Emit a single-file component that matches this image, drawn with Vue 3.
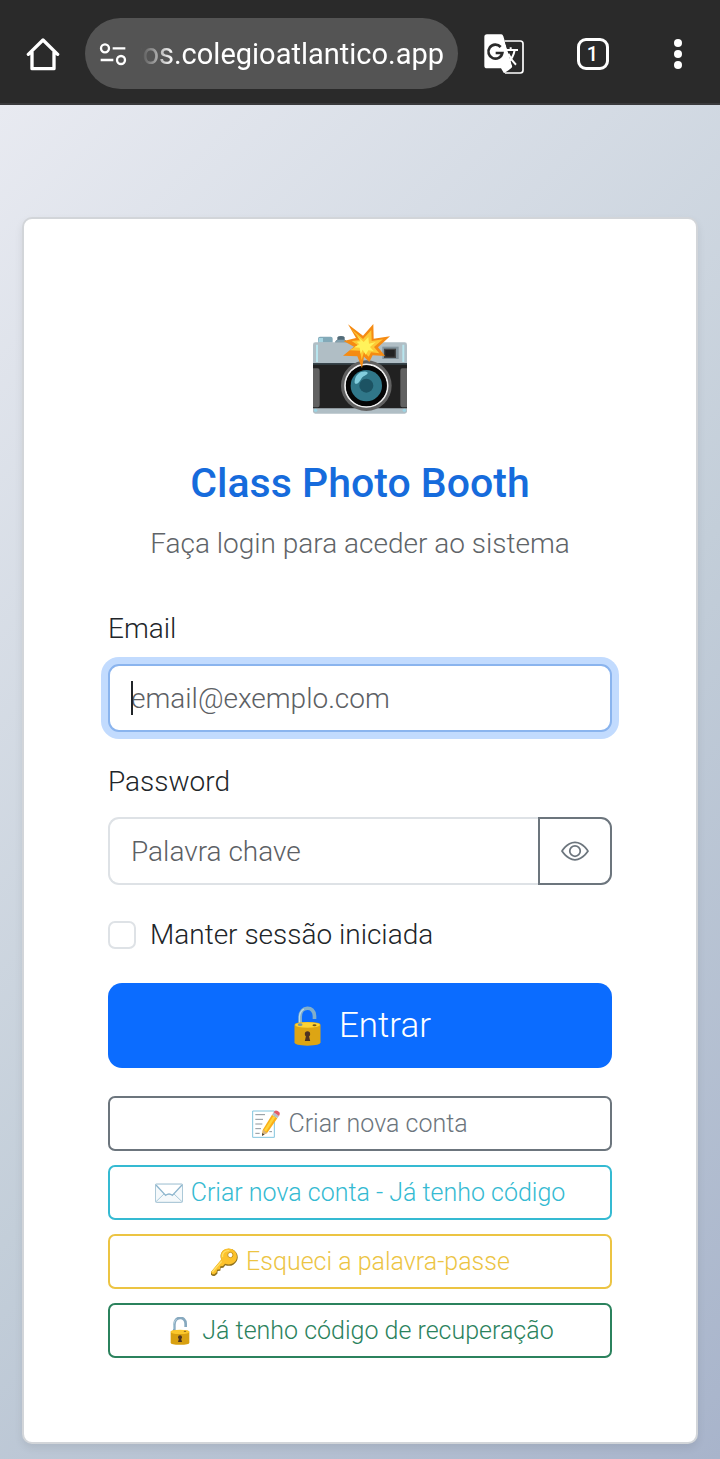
<script setup>
import { ref } from 'vue'

const email = ref('')
const password = ref('')
const remember = ref(false)
const showPassword = ref(false)

const actions = [
  { icon: 'note', label: 'Criar nova conta', tone: 'secondary' },
  { icon: 'mail', label: 'Criar nova conta - Já tenho código', tone: 'info' },
  { icon: 'key', label: 'Esqueci a palavra-passe', tone: 'warning' },
  { icon: 'lock', label: 'Já tenho código de recuperação', tone: 'success' },
]
</script>

<template>
  <div class="page">
    <header class="browser-bar">
      <button class="bar-button" type="button" aria-label="Home">
        <svg width="34" height="34" viewBox="0 0 102 102" fill="none" stroke="#fff" stroke-width="10" stroke-linecap="round" stroke-linejoin="round">
          <path d="M7 52 51 9l44 43M18 46v49h66V46" />
        </svg>
      </button>
      <button class="address" type="button">
        <svg class="site-icon" width="28" height="24" viewBox="0 0 84 72" fill="none" stroke="#fff" stroke-width="7">
          <circle cx="18" cy="19" r="12" />
          <path d="M41 19h38M5 54h38" />
          <circle cx="66" cy="54" r="12" />
        </svg>
        <span class="address-text"><span>tos.colegioatlantico.app</span></span>
      </button>
      <button class="bar-button translate" type="button" aria-label="Translate">
        <svg width="40" height="40" viewBox="0 0 120 120">
          <path d="M9 1h43q4 0 6 6l28 93-26 18-9-15H9q-8 0-8-8V9q0-8 8-8Z" fill="#fff" />
          <path d="M62 22h48q6 0 6 6v80q0 6-6 6H73l12-16Z" fill="#2a2a2a" />
          <path d="M62 21h47q8 0 8 8v80q0 8-8 8H63" fill="none" stroke="#fff" stroke-width="5" />
          <path d="M50 39A21 21 0 1 0 55 57H35" fill="none" stroke="#2a2a2a" stroke-width="8" />
          <path d="M66 48h36M80 40v8M92 48q-4 25-22 38M73 59q8 19 23 33" fill="none" stroke="#fff" stroke-width="6" />
        </svg>
      </button>
      <button class="bar-button" type="button" aria-label="Tabs"><span class="tab-count">1</span></button>
      <button class="bar-button" type="button" aria-label="Menu">
        <svg width="8" height="30" viewBox="0 0 8 30" fill="#fff">
          <circle cx="4" cy="4" r="4" /><circle cx="4" cy="15" r="4" /><circle cx="4" cy="26" r="4" />
        </svg>
      </button>
    </header>

    <main class="content">
      <form class="card" @submit.prevent>
        <div class="logo">
          <svg width="94" height="90" viewBox="39 42 282 270" role="img" aria-label="Camera">
            <path d="M54 98V86q0-6 6-6h32q6 0 6 6v12Z" fill="#82a9b8" />
            <path d="M57 84h12v13H55Z" fill="#a6d5e2" />
            <path d="M112 82q2-4 11-4t11 4v7q8 3 8 10h-37q0-7 7-10Z" fill="#526b78" />
            <path d="M108 94q2-5 8-5h16q6 0 6 8h-31Z" fill="#82a0ae" />
            <rect x="39" y="97" width="282" height="214" rx="7" fill="#b0bec5" />
            <path d="M48 104h6v52h-6zm259 0h6v52h-6z" fill="#b8e5ee" />
            <path d="M39 159h282v136H39Z" fill="#212121" />
            <path d="M39 159h282v5H39Z" fill="#37444b" />
            <path d="M39 175h14q6 0 6 7v103q0 7-6 7H39Zm282 0h-14q-6 0-6 7v103q0 7 6 7h14Z" fill="#616161" />
            <circle cx="47" cy="301" r="5" fill="#9bd5e4" /><circle cx="313" cy="301" r="5" fill="#9bd5e4" />
            <rect x="247" y="110" width="49" height="37" fill="#82939c" />
            <rect x="252" y="116" width="36" height="28" fill="#424242" />
            <rect x="256" y="120" width="28" height="20" fill="#222" />
            <circle cx="199" cy="227" r="76" fill="#616161" />
            <circle cx="199" cy="227" r="64" fill="#111" stroke="#eee" stroke-width="5" />
            <circle cx="199" cy="227" r="61" fill="#050505" />
            <circle cx="199" cy="227" r="47" fill="#307789" />
            <circle cx="199" cy="227" r="21" fill="#1c5363" />
            <path d="M164 213c3-20 17-30 34-28 10 2 3 9-4 12-13 6-12 19-23 24-6 2-8-2-7-8Z" fill="#82cddd" />
            <path d="m144 43 45 34 31-35 1 44 49-7-36 33 21 26-37-2-10 20-16-16-6 35-14-36-43-2 33-27-31-17 37-9Z" fill="#f58b13" />
            <path d="m153 56 36 31 25-27 1 33 34-5-27 23 16 19-25-3-7 13-14-14-7 24-5-28-31-1 25-15-19-13 26-3Z" fill="#fdc936" />
            <path d="m171 78 20 18 14-15 2 20 20-5-17 15 11 12-16-2-8 13-9-15-6 12-3-18-17-1 16-9-8-8 12-1Z" fill="#fff35b" />
          </svg>
        </div>
        <h1>Class Photo Booth</h1>
        <p class="subtitle">Faça login para aceder ao sistema</p>

        <div class="field">
          <label for="email">Email</label>
          <div class="control">
            <input id="email" v-model="email" class="text-input focused" type="email" placeholder="email@exemplo.com" />
            <span class="caret" aria-hidden="true"></span>
          </div>
        </div>

        <div class="field">
          <label for="password">Password</label>
          <div class="input-group">
            <input id="password" v-model="password" class="text-input" :type="showPassword ? 'text' : 'password'" placeholder="Palavra chave" />
            <button class="reveal" type="button" aria-label="Mostrar palavra chave" @click="showPassword = !showPassword">
              <svg width="28" height="28" viewBox="0 0 16 16" fill="#6c757d">
                <path d="M16 8s-3-5.500-8-5.500S0 8 0 8s3 5.500 8 5.500S16 8 16 8M1.173 8a13 13 0 0 1 1.660-2.043C4.120 4.668 5.880 3.500 8 3.500s3.879 1.168 5.168 2.457A13 13 0 0 1 14.828 8a13 13 0 0 1-1.660 2.043C11.879 11.332 10.119 12.500 8 12.500s-3.879-1.168-5.168-2.457A13 13 0 0 1 1.172 8z" />
                <path d="M8 5.500a2.500 2.500 0 1 0 0 5 2.500 2.500 0 0 0 0-5M4.500 8a3.500 3.500 0 1 1 7 0 3.500 3.500 0 0 1-7 0" />
              </svg>
            </button>
          </div>
        </div>

        <div class="check">
          <input id="remember" v-model="remember" type="checkbox" />
          <label for="remember">Manter sessão iniciada</label>
        </div>

        <button class="submit" type="submit">
          <span class="submit-icon">
            <svg width="27" height="40" viewBox="77 76 80 120" aria-hidden="true">
              <path d="M95 136v-27c0-34 43-35 43-3v9" fill="none" stroke="#82aeca" stroke-width="11" />
              <path d="M93 131v-24q2-15 13-22" fill="none" stroke="#b9dcec" stroke-width="4" />
              <path d="M78 132q0-8 39-8t39 8v53q0 10-39 10t-39-10Z" fill="#dda514" />
              <ellipse cx="117" cy="133" rx="37" ry="8" fill="#fdd235" />
              <ellipse cx="138" cy="134" rx="6" ry="3" fill="#72551c" />
              <ellipse cx="95" cy="132" rx="7" ry="4" fill="#7796a4" />
              <path d="m113 164-4 17h16l-4-17Z" fill="#4e3422" /><circle cx="117" cy="160" r="8" fill="#4e3422" />
            </svg>
          </span>
          Entrar
        </button>

        <div class="actions">
          <button v-for="action in actions" :key="action.label" type="button" class="outline" :class="action.tone">
            <span class="action-icon">
              <svg v-if="action.icon === 'note'" width="28" height="28" viewBox="0 0 84 84" aria-hidden="true">
                <path d="M2 3h65v79H2Z" fill="#fff" stroke="#82c5de" stroke-width="3" />
                <path d="M10 14h29M10 28h23M10 42h21M10 56h17M10 70h13M52 65h8" stroke="#8c9599" stroke-width="3" />
                <path d="M32 60 60 14l16 11-30 43-16 9Z" fill="#faae18" />
                <path d="m36 61 28-43 6 4-28 43Z" fill="#ffd339" />
                <path d="m30 77 3-17q6 1 7 6 4 0 6 3Z" fill="#d5b481" />
                <path d="m30 77 1-8 6 5Z" fill="#3b3b3b" />
                <path d="m60 14 5-7 16 11-5 7Z" fill="#b4bfc5" />
                <path d="m65 7 4-5q7-2 13 5 3 4-1 11Z" fill="#e35b66" />
              </svg>
              <svg v-else-if="action.icon === 'mail'" width="28" height="28" viewBox="0 0 84 84" aria-hidden="true">
                <rect x="1" y="15" width="82" height="55" rx="3" fill="#f5f9fb" stroke="#9ebfd1" stroke-width="3" />
                <path d="m3 68 26-25M81 68 55 43" stroke="#a8c9da" stroke-width="3" />
                <path d="m3 18 29 31q10-8 20 0l29-31" fill="#fff" stroke="#8cb5cd" stroke-width="4" />
              </svg>
              <svg v-else-if="action.icon === 'key'" width="28" height="28" viewBox="0 0 84 84" aria-hidden="true">
                <path d="M34 36C25 12 46-4 67 4c20 9 22 35 3 46q-10 6-24 2l-6 7-8 1-1 8-8 1-1 8-7 6q-6 3-12-3v-8Z" fill="#8d701d" />
                <path d="M34 34C26 10 47-5 67 4c17 9 19 32 2 42q-10 6-24 1l-6 7-8 1-1 9-9 1-1 8-7 6H7l-4-7Z" fill="#fcc22c" />
                <path d="m35 40-28 32M38 27c-3-12 9-21 20-19" stroke="#ffe067" stroke-width="4" fill="none" />
                <circle cx="61" cy="21" r="8" fill="#fff" stroke="#c9961a" stroke-width="3" />
              </svg>
              <svg v-else width="28" height="28" viewBox="0 0 84 84" aria-hidden="true">
                <path d="M25 44V24C25-4 59-4 59 20v10" fill="none" stroke="#87a9bf" stroke-width="8" />
                <path d="M23 36V22q2-12 9-16" fill="none" stroke="#b9d3df" stroke-width="3" />
                <path d="M14 44q0-5 28-5t28 5v33q0 6-28 6t-28-6Z" fill="#d8a010" />
                <path d="M14 44q0-6 28-6t28 6q0 7-28 7t-28-7Z" fill="#fbc72a" />
                <ellipse cx="57" cy="43" rx="4" ry="2" fill="#8c671a" />
                <path d="m39 64-3 11h12l-3-11Z" fill="#4e3422" /><circle cx="42" cy="61" r="6" fill="#4e3422" />
              </svg>
            </span>
            {{ action.label }}
          </button>
        </div>
      </form>
    </main>
  </div>
</template>

<style>
body {
  margin: 0;
}
</style>

<style scoped>
.page {
  min-height: 100vh;
  display: flex;
  flex-direction: column;
  font-family: Roboto, "Liberation Sans", sans-serif;
  font-weight: 300;
  font-size: 28px;
  line-height: 42px;
  color: #212529;
}
.page *,
.page *::before {
  box-sizing: border-box;
}
button,
input {
  font: inherit;
  margin: 0;
}
button {
  cursor: pointer;
}
svg {
  display: block;
  flex: none;
}
.browser-bar {
  display: flex;
  align-items: center;
  height: 105px;
  padding-top: 4px;
  background: #2a2a2a;
  border-bottom: 2px solid #3a3a3c;
}
.bar-button {
  flex: none;
  width: 85px;
  height: 70px;
  padding: 0;
  border: 0;
  background: none;
  display: flex;
  align-items: center;
  justify-content: center;
}
.translate {
  width: 92px;
}
.address {
  flex: 1;
  min-width: 0;
  height: 71px;
  padding: 0 14px;
  border: 0;
  border-radius: 36px;
  background: #545454;
  color: #fff;
  display: flex;
  align-items: center;
  gap: 4px;
  font-weight: 400;
  font-size: 29px;
}
.address-text {
  flex: 1;
  min-width: 0;
  display: flex;
  justify-content: flex-end;
  overflow: hidden;
  white-space: nowrap;
  mask-image: linear-gradient(to right, transparent 10px, #000 42px);
}
.tab-count {
  width: 32px;
  height: 32px;
  border: 3px solid #fff;
  border-radius: 9px;
  color: #fff;
  font-size: 20px;
  font-weight: 500;
  line-height: 26px;
  text-align: center;
}
.content {
  flex: 1;
  padding: 112px 22px 14px;
  background: linear-gradient(135deg, #e8eaf1 0%, #c3ced9 55%, #a8b4cb 100%);
}
.card {
  padding: 84px;
  background: #fff;
  border: 2px solid #d2d5d9;
  border-radius: 10px;
  box-shadow: 0 4px 8px rgba(0, 0, 0, 0.08);
}
.logo {
  display: flex;
  align-items: center;
  justify-content: center;
  height: 132px;
  margin-bottom: 23px;
}
h1 {
  margin: 0 0 15px;
  font-size: 41px;
  font-weight: 500;
  line-height: 50px;
  text-align: center;
  color: #166bdc;
}
.subtitle {
  margin: 0 0 43px;
  text-align: center;
  color: #606468;
}
.field {
  margin-bottom: 29px;
}
.field label {
  display: block;
  margin-bottom: 14px;
}
.control {
  position: relative;
}
.text-input {
  display: block;
  width: 100%;
  height: 68px;
  padding: 0 21px;
  border: 2px solid #dee2e6;
  border-radius: 11px;
  background: #fff;
  color: #212529;
  outline: 0;
}
.text-input::placeholder {
  color: #5c6064;
  opacity: 1;
}
.focused {
  border-color: #8ab4ee;
  box-shadow: 0 0 0 7px #c2dbfe;
}
.caret {
  position: absolute;
  top: 17px;
  left: 23px;
  width: 2px;
  height: 34px;
  background: #212529;
}
.input-group {
  display: flex;
}
.input-group .text-input {
  flex: 1;
  min-width: 0;
  border-right: 0;
  border-radius: 11px 0 0 11px;
}
.reveal {
  width: 74px;
  padding: 0;
  border: 2px solid #6c757d;
  border-radius: 0 11px 11px 0;
  background: #fff;
  display: flex;
  align-items: center;
  justify-content: center;
}
.check {
  display: flex;
  align-items: center;
  gap: 14px;
  margin-bottom: 27px;
}
.check input {
  appearance: none;
  width: 28px;
  height: 28px;
  border: 2px solid #dee2e6;
  border-radius: 7px;
  background: #fff;
}
.check input:checked {
  background: #0d6efd;
  border-color: #0d6efd;
}
.submit {
  display: flex;
  align-items: center;
  justify-content: center;
  gap: 12px;
  width: 100%;
  height: 85px;
  margin-bottom: 28px;
  border: 0;
  border-radius: 14px;
  background: #0b6cff;
  color: #fff;
  font-size: 35px;
}
.submit-icon {
  width: 38px;
  display: flex;
  justify-content: center;
}
.actions {
  display: grid;
  gap: 14px;
}
.outline {
  display: flex;
  align-items: center;
  justify-content: center;
  gap: 8px;
  height: 55px;
  padding: 0 14px;
  border: 2px solid currentColor;
  border-radius: 7px;
  background: #fff;
  font-size: 25px;
}
.secondary { color: #6c757d; }
.info { color: #35bad2; }
.warning { color: #ecc443; }
.success { color: #2b825d; }
</style>
